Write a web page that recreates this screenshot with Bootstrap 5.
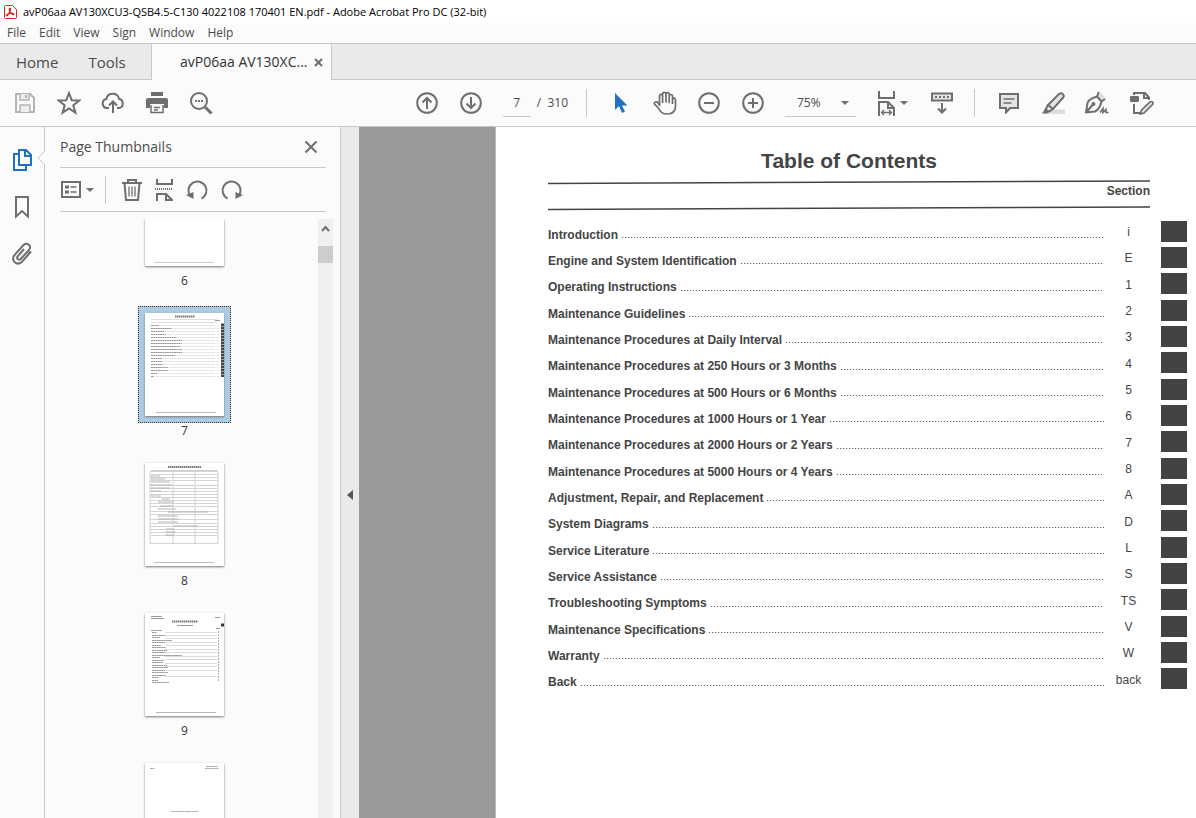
<!DOCTYPE html>
<html lang="en">
<head>
<meta charset="utf-8">
<meta name="viewport" content="width=device-width, initial-scale=1">
<title>avP06aa AV130XCU3-QSB4.5-C130 4022108 170401 EN.pdf - Adobe Acrobat Pro DC (32-bit)</title>
<link href="https://cdn.jsdelivr.net/npm/bootstrap@5.3.0/dist/css/bootstrap.min.css" rel="stylesheet">
<style>
  :root { --ink: #4b4b4b; --icon: #6e6e6e; --line: #c8c8c8; --pane: #fbfbfb; --bar: #eaeaea; }
  body { font-family: "Open Sans", "Noto Sans", sans-serif; font-size: 12px; line-height: 16px; color: var(--ink); background: var(--pane); }
  svg { display: block; fill: none; stroke: var(--icon); stroke-width: 2; }
  button { background: none; border: 0; padding: 0; color: inherit; }
  a { color: inherit; text-decoration: none; }
  .titlebar { height: 23px; background: #fff; color: #000; font-size: 11px; padding-left: 3px; gap: 5px; }
  .menubar { height: 20px; padding-left: 7px; gap: 13px; font-size: 12px; }
  .tabstrip { height: 37px; background: var(--bar); border-top: 1px solid var(--line); font-size: 15px; }
  .tabstrip .rest { border-bottom: 1px solid var(--line); }
  .home-tabs { width: 151px; padding-left: 16px; gap: 30px; }
  .doc-tab { width: 181px; padding: 0 8px 0 28px; background: var(--pane); border: solid var(--line); border-width: 0 1px; font-size: 14px; color: #333; }
  .tools { height: 47px; border-bottom: 1px solid var(--line); padding: 0 33px 0 3px; }
  .tool { width: 44px; height: 44px; display: flex; align-items: center; justify-content: center; }
  .split { width: 1px; height: 28px; background: var(--line); }
  .field { border: 0; border-bottom: 1px solid var(--line); border-radius: 0; background: transparent; color: var(--ink); height: 28px; padding: 0; outline: 0; appearance: none; }
  .page-no { width: 28px; text-align: center; margin-left: 10px; margin-right: 6px; }
  .page-total { margin-right: 18px; white-space: nowrap; }
  .zoom-box { width: 71px; margin: 0 14px 0 10px; border-bottom: 1px solid var(--line); }
  .zoom-box .field { border: 0; width: 52px; height: 27px; padding-left: 12px; }
  .caret { width: 0; height: 0; border: solid transparent; border-width: 4px 4px 0; border-top-color: var(--icon); }
  .workspace { min-height: 0; }
  .rail { width: 45px; border-right: 1px solid var(--line); padding-top: 9px; }
  .rail .rail-btn { width: 44px; height: 47px; display: flex; align-items: center; justify-content: center; }
  .notch { position: absolute; left: 37px; top: 23px; }
  .thumbs-pane { width: 296px; border-right: 1px solid var(--line); }
  .pane-head { height: 41px; margin: 0 14px 0 15px; border-bottom: 1px solid var(--line); }
  .pane-head h2 { font-size: 14px; line-height: 20px; font-weight: 400; margin: 0; }
  .pane-tools { height: 44px; margin: 0 14px 0 15px; border-bottom: 1px solid var(--line); gap: 11px; }
  .thumb-area { margin-top: 7px; min-height: 0; }
  .thumb-list { padding-left: 6px; min-height: 0; overflow: hidden; }
  .thumb { display: block; margin: 0; text-align: center; flex: none; }
  .frame { display: block; width: 93px; height: 117px; padding: 6px; border: 1px solid transparent; margin: 0 auto; }
  .frame.cut { height: 54px; padding-top: 0; border-top: 0; }
  .frame.on { background: #aacce2; border: 1px dotted #5a2d1c; }
  .frame svg { background: #fff; box-shadow: 0 1px 2px #777; stroke: #999; stroke-width: 1; width: 79px; }
  .thumb figcaption { height: 33px; line-height: 16px; color: #333; }
  .scroller { width: 15px; margin-right: 7px; background: #f0f0f0; }
  .scroller .grip { height: 17px; background: #cdcdcd; margin-top: 9px; }
  .handle { width: 18px; background: var(--bar); }
  .gutter { width: 137px; background: #999; border-right: 1px solid #bbb; }
  .sheet { background: #fff; color: #444; font-family: "Liberation Sans", Arial, sans-serif; padding: 22px 9px 0 52px; overflow: hidden; }
  .sheet h1 { font-size: 21px; line-height: 24px; font-weight: 700; margin: 0; text-align: center; }
  .sheet-head { margin-right: 37px; }
  .rule { width: 100%; height: 5px; stroke: #444; }
  .rule.upper { margin-top: 7px; }
  .section-label { font-size: 12px; line-height: 12px; font-weight: 700; height: 21px; text-align: right; }
  .toc { width: 100%; height: 474px; margin-top: 7px; font-size: 12px; line-height: 16px; }
  .toc td { padding: 0; vertical-align: middle; }
  .toc .entry { font-weight: 700; white-space: nowrap; padding-top: 7px; }
  .toc .sec { width: 49px; text-align: center; padding-top: 2px; }
  .toc .mark-cell { width: 34px; }
  .leader { height: 1px; margin: 6px 0 0 4px; background: repeating-linear-gradient(90deg, #666 0 1px, #ddd 1px 2px, #fff 2px 3px); }
  .block { width: 26px; height: 21px; background: #434343; margin-left: auto; }
</style>
</head>
<body class="vh-100 d-flex flex-column overflow-hidden">

<header class="titlebar d-flex align-items-center flex-shrink-0">
  <svg width="15" height="16" viewBox="0 0 15 16" style="stroke:#e2231a;stroke-width:1"><path d="M1.5 2.5q0-1 1-1h7l4 4v8q0 1-1 1h-10q-1 0-1-1z"/><path d="M7 4.5c1.5 0 0 4-3 7.2-1.500.3-.6-1.700 3-2.400 3-.4 4.500.500 3.700 1.200C9.500 11 6 8 6.300 5.200 6.400 4.700 6.600 4.500 7 4.500z" stroke-width="1.300"/></svg>
  <span>avP06aa AV130XCU3-QSB4.5-C130 4022108 170401 EN.pdf - Adobe Acrobat Pro DC (32-bit)</span>
</header>

<nav class="menubar d-flex align-items-center flex-shrink-0" aria-label="Menu">
  <a href="#">File</a><a href="#">Edit</a><a href="#">View</a><a href="#">Sign</a><a href="#">Window</a><a href="#">Help</a>
</nav>

<nav class="tabstrip d-flex flex-shrink-0" aria-label="Tabs">
  <div class="home-tabs rest d-flex align-items-center"><a href="#">Home</a><a href="#">Tools</a></div>
  <div class="doc-tab d-flex align-items-center justify-content-between">
    <a href="#">avP06aa AV130XC...</a>
    <button aria-label="Close tab"><svg width="9" height="9" viewBox="0 0 9 9"><path d="M1 1l7 7M8 1l-7 7"/></svg></button>
  </div>
  <div class="rest flex-grow-1"></div>
</nav>

<div class="tools d-flex align-items-center justify-content-between flex-shrink-0" role="toolbar">
  <div class="d-flex align-items-center">
    <button class="tool" aria-label="Save"><svg width="22" height="22" viewBox="0 0 22 22" style="stroke:#b4b4b4"><path d="M2 2h14l4 4v14H2z"/><path d="M6 2v6h9V2M6 20v-7h10v7" fill="#eee" stroke-width="1.500"/><path d="M12 3v3"/></svg></button>
    <button class="tool" aria-label="Star"><svg width="24" height="24" viewBox="0 0 24 24"><path d="M12 2l2.700 7.200 7.600.300-6 4.800 2.100 7.400L12 17.500l-6.400 4.200 2.100-7.400-6-4.800 7.600-.3z"/></svg></button>
    <button class="tool" aria-label="Upload"><svg width="24" height="22" viewBox="0 0 24 22"><path d="M8 16H6a4.500 4.500 0 0 1-.7-8.900A6.500 6.500 0 0 1 18 6.800 4.700 4.700 0 0 1 18 16h-2M12 21V10M8 13.500l4-4 4 4"/></svg></button>
    <button class="tool" aria-label="Print"><svg width="22" height="22" viewBox="0 0 22 22"><path d="M5 4V0h12v4z" fill="#6e6e6e" stroke="none"/><path d="M2 6h18q2 0 2 2v8h-4v-4H4v4H0V8q0-2 2-2z" fill="#6e6e6e" stroke="none"/><path d="M5 13v7.500h12V13M8 15.500h6M8 18h4" stroke-width="1.500"/></svg></button>
    <button class="tool" aria-label="Find"><svg width="24" height="24" viewBox="0 0 24 24"><circle cx="10" cy="10" r="8"/><path d="M16 16l6.500 6.500" stroke-width="3"/><path d="M6 10h8.500" stroke-dasharray="2 1"/></svg></button>
  </div>
  <div class="d-flex align-items-center">
    <button class="tool" aria-label="Previous page"><svg width="22" height="22" viewBox="0 0 22 22"><circle cx="11" cy="11" r="9.800"/><path d="M11 17V6M6.500 10.500L11 6l4.500 4.500"/></svg></button>
    <button class="tool" aria-label="Next page"><svg width="22" height="22" viewBox="0 0 22 22"><circle cx="11" cy="11" r="9.800"/><path d="M11 5v11M6.500 11.500L11 16l4.500-4.500"/></svg></button>
    <input class="field page-no" type="text" value="7" aria-label="Page number">
    <span class="page-total">/&nbsp; 310</span>
    <span class="split me-1"></span>
    <button class="tool ms-2" aria-label="Select"><svg width="14" height="20" viewBox="0 0 14 20" style="fill:#2070c4;stroke:none"><path d="M1 0v17l4-4 3 7 3-1.500-3-6h5.500z"/></svg></button>
    <button class="tool" aria-label="Hand"><svg width="24" height="24" viewBox="0 0 24 24" style="stroke-width:1.700"><path d="M6.500 15V5q0-1.700 1.500-1.700T9.600 5v7M9.600 5V3q0-1.700 1.600-1.700T13 3v8.500M13 3q0-1.400 1.500-1.400T16.200 3v9M16.200 5q.2-1.500 1.700-1.500T19.500 5v8M19.500 8.500q.2-1.300 1.500-1.300T22.500 9v6q0 8-8.500 8-6 0-8.300-5.500L1.500 13q-.5-1.500 1-2t2.300.6L6.500 14"/></svg></button>
    <button class="tool" aria-label="Zoom out"><svg width="22" height="22" viewBox="0 0 22 22"><circle cx="11" cy="11" r="9.800"/><path d="M6 11h10"/></svg></button>
    <button class="tool" aria-label="Zoom in"><svg width="22" height="22" viewBox="0 0 22 22"><circle cx="11" cy="11" r="9.800"/><path d="M6 11h10M11 6v10"/></svg></button>
    <label class="zoom-box d-flex align-items-center"><select class="field" aria-label="Zoom level"><option>75%</option><option>100%</option></select><span class="caret ms-1"></span></label>
    <button class="tool gap-1 me-1" aria-label="Fit width"><svg width="20" height="26" viewBox="0 0 20 26"><path d="M3 1v7h15V1M3 26V12h9l6 6v8M12 12v6h6"/><path d="M6 22.500h9M8 20l-2.500 2.500L8 25M13 20l2.500 2.500L13 25" stroke-width="1.300"/></svg><span class="caret"></span></button>
    <button class="tool mx-1 pe-2" aria-label="Scroll mode"><svg class="ms-1" width="24" height="22" viewBox="0 0 24 22"><rect x="2" y="1.500" width="20" height="7" fill="#e4e4e4"/><path d="M5 5h14" stroke-dasharray="2 2"/><path d="M12 11v10M8 16.500l4 4 4-4"/></svg></button>
    <span class="split mx-1"></span>
    <button class="tool ms-2" aria-label="Comment"><svg width="22" height="22" viewBox="0 0 22 22"><path d="M2 2h18v14h-8l-4 4.500V16H2z" fill="#e4e4e4"/><path d="M5.500 7h11M5.500 11h8" stroke-width="1.300"/></svg></button>
    <button class="tool" aria-label="Highlight"><svg width="24" height="24" viewBox="0 0 24 24"><path d="M7 18.500h17V23H3z" fill="#ddd" stroke="none"/><path d="M18 3q2.500-1.500 4 .3t.2 3.200L12 18l-5-4zM7 14l-2.500 4.500L8 20.500l4-2.500" fill="#e4e4e4"/><path d="M4 18l4 3-2 1.500H1z" fill="#6e6e6e" stroke="none"/></svg></button>
    <button class="tool" aria-label="Sign"><svg width="24" height="24" viewBox="0 0 24 24"><path d="M13 5l3-3 5 6-3 2" fill="#ddd" stroke="none"/><path d="M14 1l-2 4.500Q3.500 8 2.500 12L1 21.500l9-1q5-2.500 6.500-10L20 8M12 5.500l5 5.500M1.500 21l6-7"/><path d="M15 21.500l3-4v4l3-3v3h2.500" stroke-width="1.600"/><circle cx="8.500" cy="13" r="1"/></svg></button>
    <button class="tool" aria-label="Edit"><svg width="25" height="24" viewBox="0 0 25 24"><path d="M5 4V2h11l4 4.500V9M15 2v5h5M5 13v9h6"/><rect x="1" y="5" width="9" height="6" rx="1" fill="#6e6e6e" stroke="none"/><path d="M21 11q1.500-1 2.500 0t0 2.500L15 22l-3.500 1 .8-3.500z" fill="#e4e4e4" stroke-width="1.700"/></svg></button>
  </div>
</div>

<main class="workspace d-flex flex-grow-1">
  <nav class="rail position-relative d-flex flex-column flex-shrink-0" aria-label="Panels">
    <button class="rail-btn" aria-label="Page thumbnails"><svg width="24" height="24" viewBox="0 0 22 24" style="stroke:#2070c4"><path d="M8 2h7l5 5v10H8zM14 2v6h6M8 6H3v16h12v-5"/></svg></button>
    <svg class="notch" width="8" height="16" viewBox="0 0 8 16" style="fill:#fbfbfb;stroke:#c8c8c8;stroke-width:1"><path d="M8 0v1L1 8l7 7v1"/></svg>
    <button class="rail-btn" aria-label="Bookmarks"><svg width="16" height="24" viewBox="0 0 16 24"><path d="M2 2h12v19.500L8 16l-6 5.500z"/></svg></button>
    <button class="rail-btn" aria-label="Attachments"><svg width="22" height="24" viewBox="0 0 22 24"><path d="M13 7l-6.500 7.500q-1 1.800.4 2.800t2.800-.3L18 8q2.300-3.300-.2-5.300T12.500 3L3.500 13q-3 4.500.3 7.300t7-.3L20 9.500"/></svg></button>
  </nav>

  <section class="thumbs-pane d-flex flex-column flex-shrink-0">
    <div class="pane-head d-flex align-items-center justify-content-between flex-shrink-0">
      <h2>Page Thumbnails</h2>
      <button class="me-2" aria-label="Close panel"><svg width="14" height="14" viewBox="0 0 14 14"><path d="M1.500 1.500l11 11M12.500 1.500l-11 11"/></svg></button>
    </div>
    <div class="pane-tools d-flex align-items-center flex-shrink-0">
      <button class="d-flex align-items-center gap-1" aria-label="Options"><svg width="22" height="20" viewBox="0 0 22 20"><rect x="2" y="2" width="18" height="15"/><path d="M5 7h4M5 12h4" stroke-width="3"/><path d="M10.500 7h6M10.500 12h6" stroke-width="1.500"/></svg><span class="caret"></span></button>
      <span class="split"></span>
      <button class="ms-1" aria-label="Delete pages"><svg width="22" height="24" viewBox="0 0 22 24"><path d="M1 5h20M7 5V2h8v3M3.500 5l1.500 17h12l1.500-17"/><path d="M8 8.500v10M11 8.500v10M14 8.500v10" stroke-width="1.300"/></svg></button>
      <button aria-label="Split"><svg width="20" height="24" viewBox="0 0 20 24"><path d="M3 1v5h15V1M3 23v-7h9l6 6v1M12 16v6h6"/><path d="M1 11h18" stroke-dasharray="1 1"/></svg></button>
      <button aria-label="Rotate left"><svg width="24" height="22" viewBox="0 0 24 22"><path d="M5 16.500a9 9 0 1 1 11.500 3"/><path d="M1 16l7.500-3 0 7z" fill="#6e6e6e" stroke="none"/></svg></button>
      <button aria-label="Rotate right"><svg width="24" height="22" viewBox="0 0 24 22"><path d="M19 16.500a9 9 0 1 0-11.500 3"/><path d="M23 16l-7.500-3 0 7z" fill="#6e6e6e" stroke="none"/></svg></button>
    </div>
    <div class="thumb-area d-flex flex-grow-1">
      <div class="thumb-list d-flex flex-column flex-grow-1">
        <figure class="thumb"><span class="frame cut"><svg width="79" height="47" viewBox="0 0 79 47"><path d="M9 43.500h60" stroke="#ccc"/></svg></span><figcaption>6</figcaption></figure>
        <figure class="thumb"><span class="frame on"><svg width="79" height="103" viewBox="0 0 79 103"><path d="M30 3.500h20" stroke="#777" stroke-width="2" stroke-dasharray="1.500 .5"/><path d="M6 6.500h66M6 9.500h66" stroke="#ddd"/><path d="M70 7.500h5" stroke="#999"/><path d="M6 12.500h8m-8 3h21m-21 3h14m-14 3h15m-15 3h26m-26 3h31m-31 3h31m-31 3h30m-30 3h31m-31 3h31m-31 3h24m-24 3h11m-11 3h11m-11 3h12m-12 3h17m-17 3h17m-17 3h6m-6 3h3" stroke-dasharray="2 .3"/><path d="M15 12.500h55m-42 3h42m-49 3h49m-48 3h48m-37 3h37m-32 3h32m-32 3h32m-33 3h33m-32 3h32m-32 3h32m-39 3h39m-52 3h52m-52 3h52m-52 3h52m-46 3h46m-46 3h46m-57 3h57m-60 3h60" stroke="#e6e6e6"/><path d="M73 12v53" stroke="#bbb" stroke-dasharray="1 2"/><path d="M77.500 10.500v54" stroke="#444" stroke-width="3" stroke-dasharray="2.500 .5"/><path d="M11 99.500h60" stroke="#bbb"/></svg></span><figcaption>7</figcaption></figure>
        <figure class="thumb"><span class="frame"><svg width="79" height="103" viewBox="0 0 79 103"><path d="M23 4h33" stroke="#777" stroke-width="2" stroke-dasharray="1.500 .5"/><path d="M6 7.500h66" stroke="#ccc"/><path d="M5 8.500h68v72H5zM28 8.500v72M50 8.500v72M5 11.500h68m-68 3h68m-68 3h68m-68 5h68m-68 3h68m-68 3h68m-68 3h68m-68 3h68m-68 3h68m-68 3h68m-68 3h68m-68 5h68m-68 3h68m-68 5h68m-68 4h68m-68 3h68m-68 3h68m-68 3h68m-68 3h68" stroke="#d4d4d4"/><path d="M6 13h9m-9 3h14m-14 3h19m-19 3h21m-21 3h19m-19 3h10m-10 5h10m1 3h8m-12 3h16m-14 4h13m-15 3h18m-8 3h40m-50 4h20m-20 3h21m-21 3h20m-4 4h24m-32 3h8m-8 3h9m-9 3h8" stroke="#aaa" stroke-dasharray="2 .3"/><path d="M9 99.500h60" stroke="#bbb"/></svg></span><figcaption>8</figcaption></figure>
        <figure class="thumb"><span class="frame"><svg width="79" height="103" viewBox="0 0 79 103"><path d="M27 8.500h26" stroke="#777" stroke-width="2" stroke-dasharray="1.500 .5"/><path d="M6 3.500h11m-11 2h13M70 4.500h5M32 12.500h16M71 15.500h4"/><path d="M76 12h3" stroke="#333" stroke-width="3"/><path d="M6 17.500h11m-10 2h5m-5 3h17m-17 2h8m-8 3h20m-20 2h14m-14 3h9m-9 2h14m-14 3h15m-15 2h16m-16 3h30m-30 2h8m-8 3h12m-12 2h11m-11 3h15m-15 2h16m-16 3h22m-22 2h16m-16 3h14m-14 2h7m-7 3h6m-6 2h17" stroke="#999" stroke-dasharray="2 .3"/><path d="M20 19.500h52m-52 3h52m-52 3h52m-52 4h52m-52 3h52m-52 4h52m-52 3h52m-52 4h52m-52 3h52m-52 4h52m-52 3h52m-52 4h52m-52 6h52" stroke="#ddd"/><path d="M73.500 18v51" stroke="#aaa" stroke-dasharray="2 1"/><path d="M11 99.500h60" stroke="#bbb"/></svg></span><figcaption>9</figcaption></figure>
        <figure class="thumb"><span class="frame"><svg width="79" height="103" viewBox="0 0 79 103"><path d="M5 5.500h5M61 3.500h12m-13 2h14M26 48.500h27" stroke="#aaa" stroke-dasharray="2 .3"/></svg></span></figure>
      </div>
      <div class="scroller flex-shrink-0">
        <button class="d-flex align-items-center justify-content-center w-100 pt-1" aria-label="Scroll up"><svg width="9" height="14" viewBox="0 0 9 14"><path d="M1 8l3.500-4L8 8"/></svg></button>
        <div class="grip"></div>
      </div>
    </div>
  </section>

  <button class="handle d-flex align-items-center justify-content-center flex-shrink-0" aria-label="Collapse panel"><svg class="mt-5 mb-1" width="6" height="10" viewBox="0 0 6 10" style="fill:#555;stroke:none"><path d="M6 0v10L0 5z"/></svg></button>
  <div class="gutter flex-shrink-0"></div>

  <article class="sheet flex-grow-1">
    <div class="sheet-head">
      <h1>Table of Contents</h1>
      <svg class="rule upper" viewBox="0 0 602 5" preserveAspectRatio="none"><path d="M0 3.500L602 1" stroke-width="1.500"/></svg>
      <div class="section-label">Section</div>
      <svg class="rule" viewBox="0 0 602 5" preserveAspectRatio="none"><path d="M0 3.500L602 1" stroke-width="1.500"/></svg>
    </div>
    <table class="toc">
      <tbody>
        <tr><td class="entry"><div class="d-flex align-items-center">Introduction<span class="leader flex-grow-1"></span></div></td><td class="sec">i</td><td class="mark-cell"><div class="block"></div></td></tr>
        <tr><td class="entry"><div class="d-flex align-items-center">Engine and System Identification<span class="leader flex-grow-1"></span></div></td><td class="sec">E</td><td class="mark-cell"><div class="block"></div></td></tr>
        <tr><td class="entry"><div class="d-flex align-items-center">Operating Instructions<span class="leader flex-grow-1"></span></div></td><td class="sec">1</td><td class="mark-cell"><div class="block"></div></td></tr>
        <tr><td class="entry"><div class="d-flex align-items-center">Maintenance Guidelines<span class="leader flex-grow-1"></span></div></td><td class="sec">2</td><td class="mark-cell"><div class="block"></div></td></tr>
        <tr><td class="entry"><div class="d-flex align-items-center">Maintenance Procedures at Daily Interval<span class="leader flex-grow-1"></span></div></td><td class="sec">3</td><td class="mark-cell"><div class="block"></div></td></tr>
        <tr><td class="entry"><div class="d-flex align-items-center">Maintenance Procedures at 250 Hours or 3 Months<span class="leader flex-grow-1"></span></div></td><td class="sec">4</td><td class="mark-cell"><div class="block"></div></td></tr>
        <tr><td class="entry"><div class="d-flex align-items-center">Maintenance Procedures at 500 Hours or 6 Months<span class="leader flex-grow-1"></span></div></td><td class="sec">5</td><td class="mark-cell"><div class="block"></div></td></tr>
        <tr><td class="entry"><div class="d-flex align-items-center">Maintenance Procedures at 1000 Hours or 1 Year<span class="leader flex-grow-1"></span></div></td><td class="sec">6</td><td class="mark-cell"><div class="block"></div></td></tr>
        <tr><td class="entry"><div class="d-flex align-items-center">Maintenance Procedures at 2000 Hours or 2 Years<span class="leader flex-grow-1"></span></div></td><td class="sec">7</td><td class="mark-cell"><div class="block"></div></td></tr>
        <tr><td class="entry"><div class="d-flex align-items-center">Maintenance Procedures at 5000 Hours or 4 Years<span class="leader flex-grow-1"></span></div></td><td class="sec">8</td><td class="mark-cell"><div class="block"></div></td></tr>
        <tr><td class="entry"><div class="d-flex align-items-center">Adjustment, Repair, and Replacement<span class="leader flex-grow-1"></span></div></td><td class="sec">A</td><td class="mark-cell"><div class="block"></div></td></tr>
        <tr><td class="entry"><div class="d-flex align-items-center">System Diagrams<span class="leader flex-grow-1"></span></div></td><td class="sec">D</td><td class="mark-cell"><div class="block"></div></td></tr>
        <tr><td class="entry"><div class="d-flex align-items-center">Service Literature<span class="leader flex-grow-1"></span></div></td><td class="sec">L</td><td class="mark-cell"><div class="block"></div></td></tr>
        <tr><td class="entry"><div class="d-flex align-items-center">Service Assistance<span class="leader flex-grow-1"></span></div></td><td class="sec">S</td><td class="mark-cell"><div class="block"></div></td></tr>
        <tr><td class="entry"><div class="d-flex align-items-center">Troubleshooting Symptoms<span class="leader flex-grow-1"></span></div></td><td class="sec">TS</td><td class="mark-cell"><div class="block"></div></td></tr>
        <tr><td class="entry"><div class="d-flex align-items-center">Maintenance Specifications<span class="leader flex-grow-1"></span></div></td><td class="sec">V</td><td class="mark-cell"><div class="block"></div></td></tr>
        <tr><td class="entry"><div class="d-flex align-items-center">Warranty<span class="leader flex-grow-1"></span></div></td><td class="sec">W</td><td class="mark-cell"><div class="block"></div></td></tr>
        <tr><td class="entry"><div class="d-flex align-items-center">Back<span class="leader flex-grow-1"></span></div></td><td class="sec">back</td><td class="mark-cell"><div class="block"></div></td></tr>
      </tbody>
    </table>
  </article>
</main>
<script src="https://cdn.jsdelivr.net/npm/bootstrap@5.3.0/dist/js/bootstrap.bundle.min.js"></script>
</body>
</html>
